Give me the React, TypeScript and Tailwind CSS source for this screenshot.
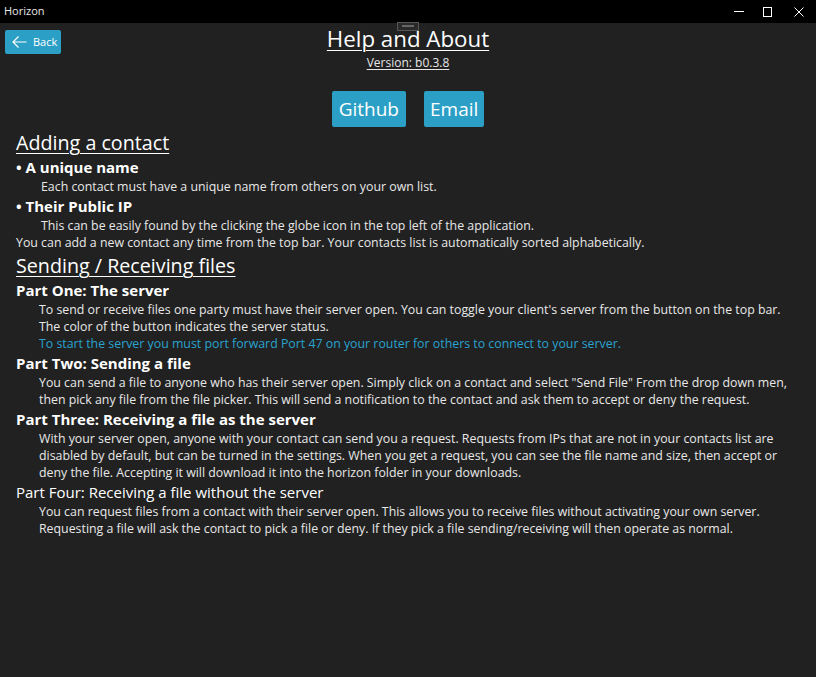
import React from "react";

const font = { fontFamily: '"Open Sans", "Noto Sans", sans-serif' };

function TitleBar() {
  return (
    <div className="flex h-[23px] items-center justify-between bg-black pl-[4px] text-[#e8e8e8]">
      <span className="text-[11px]">Horizon</span>
      <div className="flex h-full items-center">
        <div className="flex h-full w-[29px] items-center justify-center">
          <div className="h-px w-[10px] bg-white" />
        </div>
        <div className="flex h-full w-[29px] items-center justify-center">
          <div className="h-[10px] w-[9px] border border-white" />
        </div>
        <div className="flex h-full w-[34px] items-center justify-center">
          <svg width="10" height="10" viewBox="0 0 10 10">
            <path d="M0.5 0.5 L9.5 9.5 M9.5 0.5 L0.5 9.5" stroke="white" strokeWidth="1" />
          </svg>
        </div>
      </div>
    </div>
  );
}

function Header() {
  return (
    <div className="relative grid grid-cols-[1fr_auto_1fr] items-start px-[5px] pt-[7px]">
      <button className="flex h-[24px] w-[56px] items-center gap-[6px] rounded-[2px] bg-[#2b9fc5] pl-[7px] text-[11px] text-white">
        <svg width="15" height="12" viewBox="0 0 15 12" fill="none">
          <path d="M14.5 6 H1 M6.5 0.5 L1 6 L6.5 11.5" stroke="white" strokeWidth="1.2" />
        </svg>
        Back
      </button>
      <div className="flex flex-col items-center">
        <h1 className="mt-[-6px] text-[22.3px] leading-[30px] text-white underline decoration-1 underline-offset-[3px]">
          Help and About
        </h1>
        <span className="mt-[1px] text-[12px] leading-[16px] text-[#e6e6e6] underline underline-offset-2">
          Version: b0.3.8
        </span>
        <div className="mt-[20px] flex gap-[18px]">
          <button className="h-[36px] rounded-[2px] bg-[#2b9fc5] px-[7px] text-[19px] text-white">Github</button>
          <button className="h-[36px] rounded-[2px] bg-[#2b9fc5] px-[6px] text-[19px] text-white">Email</button>
        </div>
      </div>
      <div />
      <div className="absolute left-[397px] top-[-1px] h-[9px] w-[22px] border border-[#555] bg-[#2a2a2a]">
        <div className="mx-auto mt-[2px] h-[2px] w-[12px] bg-[#666]" />
      </div>
    </div>
  );
}

function SectionTitle({ children, className = "" }: { children: React.ReactNode; className?: string }) {
  return (
    <h2 className={`text-[19.7px] leading-[26px] text-white underline decoration-1 underline-offset-[3px] ${className}`}>
      {children}
    </h2>
  );
}

function Body({
  children,
  indent = "pl-[23px]",
  color = "text-[#e8e8e8]",
}: {
  children: React.ReactNode;
  indent?: string;
  color?: string;
}) {
  return <p className={`${indent} ${color} text-[12.35px] leading-[17px]`}>{children}</p>;
}

function Part({ children, bold = true }: { children: React.ReactNode; bold?: boolean }) {
  return (
    <h3 className={`text-[15px] leading-[22px] text-white ${bold ? "font-bold" : ""}`}>{children}</h3>
  );
}

export default function App() {
  return (
    <div className="flex min-h-[677px] flex-col bg-[#212121]" style={font}>
      <TitleBar />
      <div className="flex-1">
        <Header />
        <div className="px-[16px] pt-[3px]">
          <SectionTitle>Adding a contact</SectionTitle>
          <Part>• A unique name</Part>
          <Body indent="pl-[25px]">Each contact must have a unique name from others on your own list.</Body>
          <Part>• Their Public IP</Part>
          <Body indent="pl-[25px]">This can be easily found by the clicking the globe icon in the top left of the application.</Body>
          <Body indent="pl-0">
            You can add a new contact any time from the top bar. Your contacts list is automatically sorted alphabetically.
          </Body>
          <SectionTitle className="mt-[2px]">Sending / Receiving files</SectionTitle>
          <Part>Part One: The server</Part>
          <Body>
            To send or receive files one party must have their server open. You can toggle your client's server from the button on the top bar.
            <br />
            The color of the button indicates the server status.
          </Body>
          <Body color="text-[#2aa3cf]">
            To start the server you must port forward Port 47 on your router for others to connect to your server.
          </Body>
          <Part>Part Two: Sending a file</Part>
          <Body>
            You can send a file to anyone who has their server open. Simply click on a contact and select "Send File" From the drop down men,
            <br />
            then pick any file from the file picker. This will send a notification to the contact and ask them to accept or deny the request.
          </Body>
          <Part>Part Three: Receiving a file as the server</Part>
          <Body>
            With your server open, anyone with your contact can send you a request. Requests from IPs that are not in your contacts list are
            <br />
            disabled by default, but can be turned in the settings. When you get a request, you can see the file name and size, then accept or
            <br />
            deny the file. Accepting it will download it into the horizon folder in your downloads.
          </Body>
          <Part bold={false}>Part Four: Receiving a file without the server</Part>
          <Body>
            You can request files from a contact with their server open. This allows you to receive files without activating your own server.
            <br />
            Requesting a file will ask the contact to pick a file or deny. If they pick a file sending/receiving will then operate as normal.
          </Body>
        </div>
      </div>
    </div>
  );
}
